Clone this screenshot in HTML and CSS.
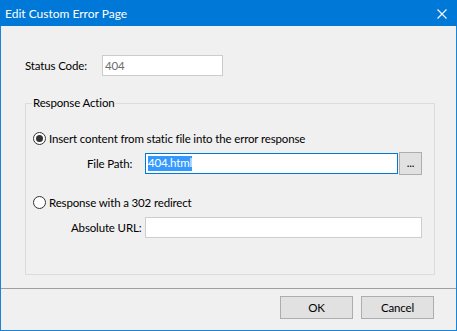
FILE: index.html
```html
<!DOCTYPE html>
<html>
<head>
<meta charset="utf-8">
<link rel="stylesheet" href="styles.css">
</head>
<body>
<div class="window">
  <div class="titlebar">
    <span class="title">Edit Custom Error Page</span>
    <span class="close">
      <svg width="10" height="10" viewBox="0 0 10 10"><path d="M0.5 0.5 L9.5 9.5 M9.5 0.5 L0.5 9.5" stroke="#fff" stroke-width="1.1" fill="none"/></svg>
    </span>
  </div>
  <div class="content">
    <div class="status-row">
      <span class="status-label">Status Code:</span>
      <div class="textbox disabled">404</div>
    </div>
    <fieldset class="group">
      <legend>Response Action</legend>
      <label class="radio-row"><span class="radio checked"></span>Insert content from static file into the error response</label>
      <div class="field-row">
        <span class="field-label file-label">File Path:</span>
        <div class="file-box">
          <div class="textbox focused"><span class="sel">404.html</span></div>
          <div class="browse">...</div>
        </div>
      </div>
      <label class="radio-row second"><span class="radio"></span>Response with a 302 redirect</label>
      <div class="field-row">
        <span class="field-label url-label">Absolute URL:</span>
        <div class="textbox"></div>
      </div>
    </fieldset>
  </div>
  <div class="footer">
    <div class="btn">OK</div>
    <div class="btn">Cancel</div>
  </div>
</div>
</body>
</html>
```
FILE: styles.css
```css
html, body {
  margin: 0;
  padding: 0;
  background: #f0f0f0;
}
body {
  font-family: Lato, "Noto Sans", sans-serif;
  font-size: 11.5px;
  letter-spacing: -0.15px;
  color: #000;
}
.window {
  width: 457px;
  height: 331px;
  box-sizing: border-box;
  border: 1px solid #1883d7;
  border-top: none;
  display: flex;
  flex-direction: column;
  background: #f0f0f0;
}
.titlebar {
  height: 26px;
  flex: none;
  background: #0078d7;
  margin: 0 -1px;
  display: flex;
  align-items: center;
  justify-content: space-between;
  padding-left: 5px;
  padding-right: 10px;
  color: #fff;
}
.title {
  font-size: 12px;
  letter-spacing: 0;
}
.close {
  display: flex;
  width: 10px;
  height: 10px;
  margin-top: 1px;
}
.content {
  flex: 1;
  padding: 29px 21px 0 24px;
}
.status-row {
  display: flex;
  align-items: center;
  height: 21px;
}
.status-label {
  width: 77px;
  white-space: nowrap;
}
.textbox {
  box-sizing: border-box;
  height: 21px;
  background: #fff;
  border: 1px solid #cdcdcd;
  padding: 0 2px;
  display: flex;
  align-items: center;
  line-height: 14px;
}
.status-row .textbox {
  width: 121px;
}
.textbox.disabled {
  color: #6d6d6d;
  border-color: #cccccc;
}
.textbox.focused {
  border-color: #0078d7;
  flex: 1;
}
.sel {
  background: #3399ff;
  color: #fff;
  padding: 0 0 1px;
}
.group {
  margin: 19px 0 0;
  border: 1px solid #dcdcdc;
  padding: 19px 12px 35px 7px;
  min-width: 0;
}
.group legend {
  padding: 0 1px;
  margin-left: -1px;
  line-height: 16px;
}
.radio-row {
  display: flex;
  align-items: center;
  height: 16px;
  gap: 3px;
  white-space: nowrap;
}
.radio-row.second {
  margin-top: 19px;
}
.radio {
  box-sizing: border-box;
  width: 13px;
  height: 13px;
  border-radius: 50%;
  border: 1px solid #333;
  background: #fff;
  display: flex;
  align-items: center;
  justify-content: center;
  flex: none;
}
.radio.checked::after {
  content: "";
  width: 7px;
  height: 7px;
  border-radius: 50%;
  background: #333;
}
.field-row {
  margin-top: 6px;
  display: grid;
  grid-template-columns: 112px 1fr;
  align-items: center;
  height: 23px;
}
.field-label {
  white-space: nowrap;
}
.file-label {
  padding-left: 54px;
}
.url-label {
  padding-left: 38px;
}
.file-box {
  display: flex;
  align-items: center;
  gap: 1px;
}
.browse {
  box-sizing: border-box;
  width: 23px;
  height: 23px;
  background: #e1e1e1;
  border: 1px solid #adadad;
  display: flex;
  align-items: center;
  justify-content: center;
  padding-bottom: 2px;
}
.footer {
  flex: none;
  height: 34px;
  border-top: 1px solid #a0a0a0;
  display: flex;
  justify-content: flex-end;
  align-items: flex-start;
  gap: 8px;
  padding: 7px 22px 0 0;
}
.btn {
  box-sizing: border-box;
  width: 73px;
  height: 23px;
  background: #e1e1e1;
  border: 1px solid #adadad;
  display: flex;
  align-items: center;
  justify-content: center;
}
```
